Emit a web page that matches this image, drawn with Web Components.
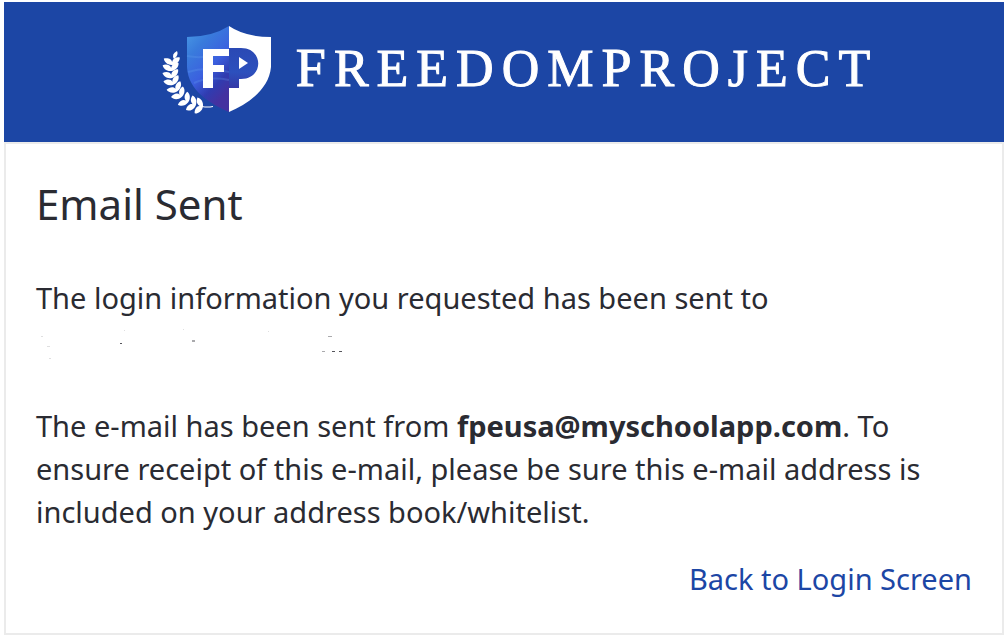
<!DOCTYPE html>
<html lang="en">
<head>
  <meta charset="utf-8">
  <meta name="viewport" content="width=device-width, initial-scale=1">
  <title>Email Sent</title>
  <style>
    :root {
      --primary: #1c46a5;
      --text: #2a2b32;
      --border: #ebebeb;
      --white: #fff;
    }
    body {
      margin: 0;
      padding: 2px 4px 4px;
      background: var(--white);
      color: var(--text);
      font-family: "Noto Sans", "Open Sans", sans-serif;
      font-size: 29px;
      line-height: 43px;
    }
  </style>
</head>
<body>
  <message-card>
    <brand-header slot="header"><span>F</span>reedom<span>P</span>roject</brand-header>
    <span slot="title">Email Sent</span>
    <message-text>
      The login information you requested has been sent to
      <hidden-address></hidden-address>
    </message-text>
    <message-text>
      The e-mail has been sent from <b>fpeusa@myschoolapp.com</b>. To ensure receipt of this e-mail, please be sure this e-mail address is included on your address book/whitelist.
    </message-text>
    <login-link slot="footer" href="#login">Back to Login Screen</login-link>
  </message-card>

  <script>
    class BrandLogo extends HTMLElement {
      constructor() {
        super();
        this.attachShadow({ mode: 'open' });
      }

      connectedCallback() {
        this.render();
      }

      // one pair of leaves for each step along the laurel stem
      static get leaves() {
        const steps = [
          [8, 37, -4], [7, 43, -8], [7, 50, -14], [8, 57, -22],
          [11, 64, -32], [15, 70, -42], [21, 76, -54], [28, 80, -66], [35, 82, -80],
        ];
        return steps.map(([x, y, turn]) => `
          <g transform="translate(${x} ${y}) rotate(${turn})">
            <path d="M0 4C-5 4-8 0-8-3C-4-4 0-2 0 1C1-2 4-4 8-3C8 1 4 4 0 4Z"/>
          </g>`).join('');
      }

      static get styles() {
        return /* css */`
        :host {
          display: block;
          flex: none;
        }
        svg {
          display: block;
          overflow: visible;
        }
        `;
      }

      render() {
        this.shadowRoot.innerHTML = /* html */`
          <style>${BrandLogo.styles}</style>
          <svg width="108" height="90" viewBox="0 0 108 90" aria-hidden="true">
            <defs>
              <linearGradient id="shade" x1="0" y1="0" x2="0.5" y2="1">
                <stop offset="0" stop-color="#4b9de6"/>
                <stop offset="0.3" stop-color="#397bdc"/>
                <stop offset="0.6" stop-color="#3b60df"/>
                <stop offset="0.82" stop-color="#303cb0"/>
                <stop offset="1" stop-color="#4431a0"/>
              </linearGradient>
              <linearGradient id="bowl" x1="0" y1="0" x2="0" y2="1">
                <stop offset="0" stop-color="#2a49b4"/>
                <stop offset="0.6" stop-color="#2c50bd"/>
                <stop offset="1" stop-color="#3438a6"/>
              </linearGradient>
            </defs>
            <g fill="#fff">
              ${BrandLogo.leaves}
              <path d="M10 35Q7 30 13 27Q15 31 10 35Z"/>
              <path d="M38 82Q43 83 49 82V83Q44 84 38 83Z"/>
            </g>
            <path d="M65 2Q48 13 23 13V43C24 67 47 80 65 88Z" fill="url(#shade)"/>
            <path d="M65 2Q81 13 107 13V43C105 66 83 80 65 88Z" fill="#fff"/>
            <path d="M23 32Q43 36 65 26M24 48Q42 42 65 48M30 59Q45 52 65 56" fill="none" stroke="#66a4ef" stroke-opacity=".25" stroke-width="2"/>
            <path d="M65 24H77C100 24 100 55 77 55H75V64H65Z" fill="url(#bowl)"/>
            <path d="M75 33L84 39L75 45Z" fill="#fff"/>
            <path d="M39 25H65V32H49V41H60V48H49V64H39Z" fill="#fff"/>
          </svg>
        `;
      }
    }

    class BrandHeader extends HTMLElement {
      constructor() {
        super();
        this.attachShadow({ mode: 'open' });
      }

      connectedCallback() {
        this.render();
      }

      static get styles() {
        return /* css */`
        :host {
          display: block;
          background: var(--primary);
          color: var(--white);
        }
        header {
          display: flex;
          align-items: flex-start;
          justify-content: center;
          gap: 24px;
          padding: 22px 0 28px 34px;
        }
        .wordmark {
          font-family: "Liberation Serif", serif;
          font-size: 52px;
          line-height: 90px;
          letter-spacing: 8px;
          text-transform: uppercase;
          -webkit-text-stroke: 1px var(--white);
        }
        ::slotted(span) {
          font-size: 54px;
          line-height: 1;
        }
        `;
      }

      render() {
        this.shadowRoot.innerHTML = /* html */`
          <style>${BrandHeader.styles}</style>
          <header>
            <brand-logo></brand-logo>
            <div class="wordmark"><slot></slot></div>
          </header>
        `;
      }
    }

    class HiddenAddress extends HTMLElement {
      constructor() {
        super();
        this.attachShadow({ mode: 'open' });
      }

      connectedCallback() {
        this.render();
      }

      static get styles() {
        return /* css */`
        :host {
          display: block;
        }
        svg {
          display: block;
        }
        `;
      }

      render() {
        this.shadowRoot.innerHTML = /* html */`
          <style>${HiddenAddress.styles}</style>
          <svg width="320" height="43" viewBox="0 0 320 43" aria-hidden="true" fill="#2a2b32">
            <path d="M5 17h2v1h-2zM11 27h3v1h-3zM13 39h2v1h-2zM88 11h1v1h-1zM147 10h1v1h-1zM232 12h1v1h-1z" fill-opacity=".15"/>
            <path d="M292 17h4v1h-4zM286 32h3v1h-3zM156 21h3v2h-3z" fill-opacity=".4"/>
            <path d="M84 24h2v1h-2zM296 32h3v1h-3zM303 32h3v1h-3z" fill-opacity=".8"/>
          </svg>
        `;
      }
    }

    class MessageText extends HTMLElement {
      constructor() {
        super();
        this.attachShadow({ mode: 'open' });
      }

      connectedCallback() {
        this.render();
      }

      static get styles() {
        return /* css */`
        :host {
          display: block;
        }
        ::slotted(b) {
          font-weight: 700;
        }
        `;
      }

      render() {
        this.shadowRoot.innerHTML = /* html */`
          <style>${MessageText.styles}</style>
          <slot></slot>
        `;
      }
    }

    class LoginLink extends HTMLElement {
      constructor() {
        super();
        this.attachShadow({ mode: 'open' });
      }

      connectedCallback() {
        this.render();
      }

      static get styles() {
        return /* css */`
        :host {
          display: block;
          text-align: right;
        }
        a {
          color: var(--primary);
          text-decoration: none;
        }
        a:hover {
          text-decoration: underline;
        }
        `;
      }

      render() {
        this.shadowRoot.innerHTML = /* html */`
          <style>${LoginLink.styles}</style>
          <a href="${this.getAttribute('href')}"><slot></slot></a>
        `;
      }
    }

    class MessageCard extends HTMLElement {
      constructor() {
        super();
        this.attachShadow({ mode: 'open' });
      }

      connectedCallback() {
        this.render();
      }

      static get styles() {
        return /* css */`
        :host {
          display: block;
        }
        .body {
          padding: 28px 30px 33px;
          border: 2px solid var(--border);
        }
        h1 {
          margin: 0 0 40px;
          font-size: 42px;
          font-weight: 400;
          line-height: 64px;
        }
        .content {
          display: flex;
          flex-direction: column;
          gap: 42px;
        }
        footer {
          margin-top: 24px;
        }
        `;
      }

      render() {
        this.shadowRoot.innerHTML = /* html */`
          <style>${MessageCard.styles}</style>
          <slot name="header"></slot>
          <main class="body">
            <h1><slot name="title"></slot></h1>
            <div class="content"><slot></slot></div>
            <footer><slot name="footer"></slot></footer>
          </main>
        `;
      }
    }

    customElements.define('brand-logo', BrandLogo);
    customElements.define('brand-header', BrandHeader);
    customElements.define('hidden-address', HiddenAddress);
    customElements.define('message-text', MessageText);
    customElements.define('login-link', LoginLink);
    customElements.define('message-card', MessageCard);
  </script>
</body>
</html>
